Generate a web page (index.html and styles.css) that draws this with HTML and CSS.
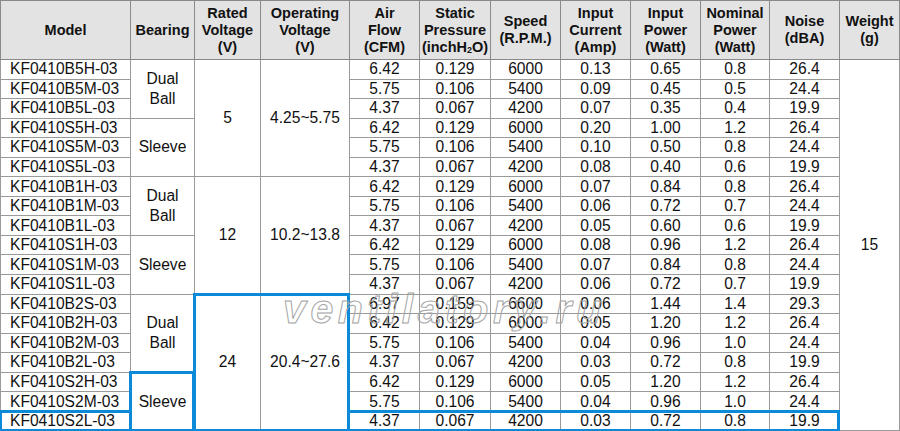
FILE: index.html
```html
<!DOCTYPE html>
<html>
<head>
<meta charset="utf-8">
<link rel="stylesheet" href="styles.css">
</head>
<body>
<div class="wrap">
<table class="spec">
  <colgroup>
    <col class="c-model"><col class="c-bear"><col class="c-rated"><col class="c-oper">
    <col class="c-air"><col class="c-static"><col class="c-speed"><col class="c-cur">
    <col class="c-pow"><col class="c-nom"><col class="c-noise"><col class="c-weight">
  </colgroup>
  <thead>
    <tr>
      <th>Model</th>
      <th>Bearing</th>
      <th>Rated<br>Voltage<br>(V)</th>
      <th>Operating<br>Voltage<br>(V)</th>
      <th>Air<br>Flow<br>(CFM)</th>
      <th>Static<br>Pressure<br>(inchH<sub>2</sub>O)</th>
      <th>Speed<br>(R.P.M.)</th>
      <th>Input<br>Current<br>(Amp)</th>
      <th>Input<br>Power<br>(Watt)</th>
      <th>Nominal<br>Power<br>(Watt)</th>
      <th>Noise<br>(dBA)</th>
      <th>Weight<br>(g)</th>
    </tr>
  </thead>
  <tbody>
    <tr><td class="model">KF0410B5H-03</td><td rowspan="3" class="span">Dual<br>Ball</td><td rowspan="6" class="span">5</td><td rowspan="6" class="span">4.25~5.75</td><td>6.42</td><td>0.129</td><td>6000</td><td>0.13</td><td>0.65</td><td>0.8</td><td>26.4</td><td rowspan="19" class="span weight">15</td></tr>
    <tr><td class="model">KF0410B5M-03</td><td>5.75</td><td>0.106</td><td>5400</td><td>0.09</td><td>0.45</td><td>0.5</td><td>24.4</td></tr>
    <tr><td class="model">KF0410B5L-03</td><td>4.37</td><td>0.067</td><td>4200</td><td>0.07</td><td>0.35</td><td>0.4</td><td>19.9</td></tr>
    <tr><td class="model">KF0410S5H-03</td><td rowspan="3" class="span">Sleeve</td><td>6.42</td><td>0.129</td><td>6000</td><td>0.20</td><td>1.00</td><td>1.2</td><td>26.4</td></tr>
    <tr><td class="model">KF0410S5M-03</td><td>5.75</td><td>0.106</td><td>5400</td><td>0.10</td><td>0.50</td><td>0.8</td><td>24.4</td></tr>
    <tr><td class="model">KF0410S5L-03</td><td>4.37</td><td>0.067</td><td>4200</td><td>0.08</td><td>0.40</td><td>0.6</td><td>19.9</td></tr>

    <tr><td class="model">KF0410B1H-03</td><td rowspan="3" class="span">Dual<br>Ball</td><td rowspan="6" class="span">12</td><td rowspan="6" class="span">10.2~13.8</td><td>6.42</td><td>0.129</td><td>6000</td><td>0.07</td><td>0.84</td><td>0.8</td><td>26.4</td></tr>
    <tr><td class="model">KF0410B1M-03</td><td>5.75</td><td>0.106</td><td>5400</td><td>0.06</td><td>0.72</td><td>0.7</td><td>24.4</td></tr>
    <tr><td class="model">KF0410B1L-03</td><td>4.37</td><td>0.067</td><td>4200</td><td>0.05</td><td>0.60</td><td>0.6</td><td>19.9</td></tr>
    <tr><td class="model">KF0410S1H-03</td><td rowspan="3" class="span">Sleeve</td><td>6.42</td><td>0.129</td><td>6000</td><td>0.08</td><td>0.96</td><td>1.2</td><td>26.4</td></tr>
    <tr><td class="model">KF0410S1M-03</td><td>5.75</td><td>0.106</td><td>5400</td><td>0.07</td><td>0.84</td><td>0.8</td><td>24.4</td></tr>
    <tr><td class="model">KF0410S1L-03</td><td>4.37</td><td>0.067</td><td>4200</td><td>0.06</td><td>0.72</td><td>0.7</td><td>19.9</td></tr>

    <tr><td class="model">KF0410B2S-03</td><td rowspan="4" class="span">Dual<br>Ball</td><td rowspan="7" class="span hl hl-t hl-l hl-b">24</td><td rowspan="7" class="span hl hl-t hl-r hl-b">20.4~27.6</td><td>6.97</td><td>0.159</td><td>6600</td><td>0.06</td><td>1.44</td><td>1.4</td><td>29.3</td></tr>
    <tr><td class="model">KF0410B2H-03</td><td>6.42</td><td>0.129</td><td>6000</td><td>0.05</td><td>1.20</td><td>1.2</td><td>26.4</td></tr>
    <tr><td class="model">KF0410B2M-03</td><td>5.75</td><td>0.106</td><td>5400</td><td>0.04</td><td>0.96</td><td>1.0</td><td>24.4</td></tr>
    <tr><td class="model">KF0410B2L-03</td><td>4.37</td><td>0.067</td><td>4200</td><td>0.03</td><td>0.72</td><td>0.8</td><td>19.9</td></tr>
    <tr><td class="model">KF0410S2H-03</td><td rowspan="3" class="span hl hl-t hl-l hl-r hl-b">Sleeve</td><td>6.42</td><td>0.129</td><td>6000</td><td>0.05</td><td>1.20</td><td>1.2</td><td>26.4</td></tr>
    <tr><td class="model">KF0410S2M-03</td><td>5.75</td><td>0.106</td><td>5400</td><td>0.04</td><td>0.96</td><td>1.0</td><td>24.4</td></tr>
    <tr><td class="model hl hl-t hl-l hl-b">KF0410S2L-03</td><td class="hl hl-t hl-b">4.37</td><td class="hl hl-t hl-b">0.067</td><td class="hl hl-t hl-b">4200</td><td class="hl hl-t hl-b">0.03</td><td class="hl hl-t hl-b">0.72</td><td class="hl hl-t hl-b">0.8</td><td class="hl hl-t hl-b hl-r">19.9</td></tr>
  </tbody>
</table>
<div class="watermark">ventilatory.ru</div>
</div>
</body>
</html>
```

FILE: styles.css
```css
html, body {
  margin: 0;
  padding: 0;
  background: #ffffff;
}

.wrap {
  position: relative;
  width: 900px;
  height: 431px;
  overflow: hidden;
}

.spec {
  border-collapse: collapse;
  table-layout: fixed;
  width: 899px;
  font-family: "Liberation Sans", Arial, sans-serif;
  color: #111;
  border: 1px solid #8a8a8a;
}

.c-model { width: 130px; }
.c-bear { width: 64px; }
.c-rated { width: 66px; }
.c-oper { width: 89px; }
.c-air { width: 70px; }
.c-static { width: 71px; }
.c-speed { width: 70px; }
.c-cur { width: 70px; }
.c-pow { width: 70px; }
.c-nom { width: 69px; }
.c-noise { width: 70px; }
.c-weight { width: 60px; }

.spec th {
  background: #e3e3e3;
  font-size: 14.5px;
  font-weight: bold;
  line-height: 17px;
  height: 58px;
  padding: 0;
  border: 1px solid #8a8a8a;
  text-align: center;
  vertical-align: middle;
}

.spec th sub {
  font-size: 9px;
  line-height: 0;
  vertical-align: -1px;
}

.spec td {
  font-size: 15.6px;
  line-height: 18px;
  height: 18.55px;
  padding: 0;
  border: 1px solid #9a9a9a;
  text-align: center;
  vertical-align: middle;
}

.spec td.span {
  line-height: 20px;
}

.spec td.model {
  text-align: left;
  padding-left: 9px;
}

/* blue highlight frame drawn over the grid lines */
.spec td.hl {
  position: relative;
}

.spec td.hl::after {
  content: "";
  position: absolute;
  top: -2px;
  left: -2px;
  right: -1px;
  bottom: -2px;
  border: 0 solid #0a8ad8;
  z-index: 2;
  pointer-events: none;
}

.spec td.hl-t::after { border-top-width: 3px; }
.spec td.hl-b::after { border-bottom-width: 3px; }
.spec td.hl-l::after { border-left-width: 3px; }
.spec td.hl-r::after { border-right-width: 3px; }

.watermark {
  position: absolute;
  left: 283px;
  top: 289px;
  font-family: "Liberation Sans", Arial, sans-serif;
  font-style: italic;
  font-weight: bold;
  font-size: 41px;
  line-height: 41px;
  letter-spacing: 4.6px;
  color: transparent;
  -webkit-text-stroke: 1px #a4a4a4;
  pointer-events: none;
  white-space: nowrap;
  z-index: 3;
}
```
